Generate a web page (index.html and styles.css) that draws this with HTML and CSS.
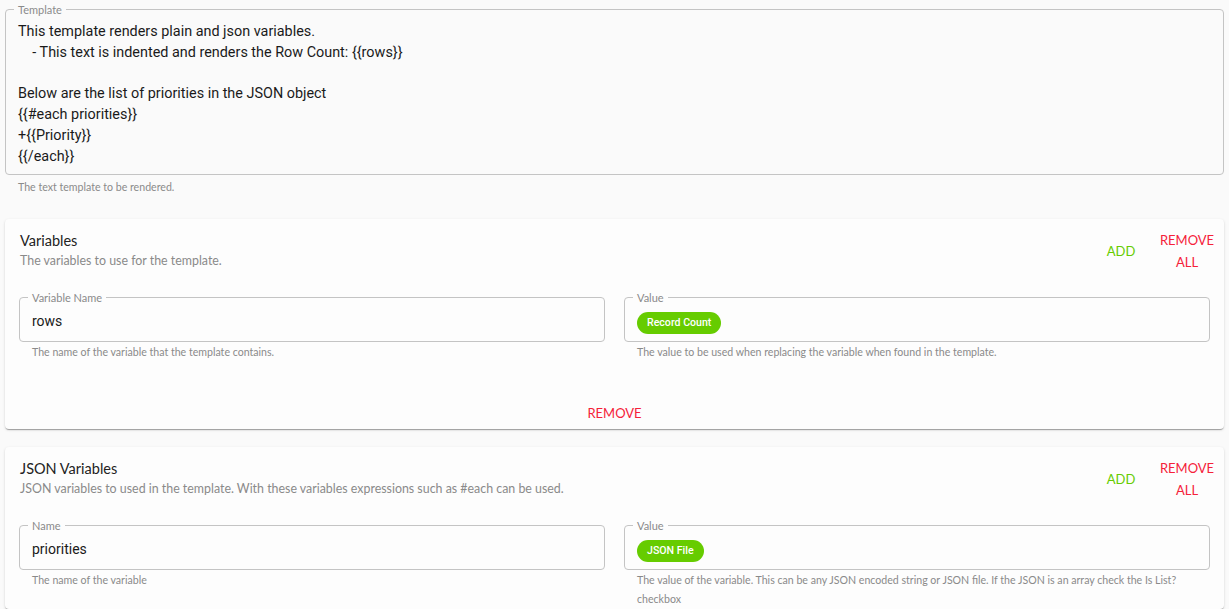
FILE: index.html
```html
<!DOCTYPE html>
<html lang="en">
<head>
<meta charset="utf-8">
<title>Template</title>
<link rel="stylesheet" href="styles.css">
</head>
<body>
<div class="page">
  <div class="field-group">
    <fieldset class="outlined template">
      <legend>Template</legend>
      <div class="template-text">This template renders plain and json variables.
    - This text is indented and renders the Row Count: {{rows}}

Below are the list of priorities in the JSON object
{{#each priorities}}
+{{Priority}}
{{/each}}</div>
    </fieldset>
    <div class="helper template-helper">The text template to be rendered.</div>
  </div>

  <section class="card">
    <div class="card-head">
      <div class="titles">
        <div class="card-title">Variables</div>
        <div class="card-sub">The variables to use for the template.</div>
      </div>
      <div class="actions">
        <button class="btn add">ADD</button>
        <button class="btn remove-all">REMOVE ALL</button>
      </div>
    </div>
    <div class="row">
      <div class="col">
        <fieldset class="outlined input">
          <legend>Variable Name</legend>
          <div class="value-text">rows</div>
        </fieldset>
        <div class="helper">The name of the variable that the template contains.</div>
      </div>
      <div class="col">
        <fieldset class="outlined input">
          <legend>Value</legend>
          <span class="chip">Record Count</span>
        </fieldset>
        <div class="helper">The value to be used when replacing the variable when found in the template.</div>
      </div>
    </div>
    <div class="card-foot">
      <button class="btn remove">REMOVE</button>
    </div>
  </section>

  <section class="card">
    <div class="card-head">
      <div class="titles">
        <div class="card-title">JSON Variables</div>
        <div class="card-sub">JSON variables to used in the template. With these variables expressions such as #each can be used.</div>
      </div>
      <div class="actions">
        <button class="btn add">ADD</button>
        <button class="btn remove-all">REMOVE ALL</button>
      </div>
    </div>
    <div class="row">
      <div class="col">
        <fieldset class="outlined input">
          <legend>Name</legend>
          <div class="value-text">priorities</div>
        </fieldset>
        <div class="helper">The name of the variable</div>
      </div>
      <div class="col">
        <fieldset class="outlined input">
          <legend>Value</legend>
          <span class="chip">JSON File</span>
        </fieldset>
        <div class="helper">The value of the variable. This can be any JSON encoded string or JSON file. If the JSON is an array check the Is List? checkbox</div>
      </div>
    </div>
  </section>
</div>
</body>
</html>
```

FILE: styles.css
```css
* { box-sizing: border-box; }

html, body {
  margin: 0;
  padding: 0;
  background: #fafafa;
  height: 609px;
  overflow: hidden;
}

body {
  font-family: "Lato", "Noto Sans", sans-serif;
  color: #333;
}

.page {
  padding: 3px 5px 0 5px;
}

.outlined {
  margin: 0;
  border: 1px solid #c4c4c4;
  border-radius: 4px;
  padding: 0 12px 6px 12px;
  min-width: 0;
}

.outlined legend {
  font-family: "Lato", sans-serif;
  font-size: 11px;
  line-height: 13px;
  color: #8a8a8a;
  padding: 0 4px;
  margin-left: -4px;
}

.template-text {
  font-family: "Roboto", sans-serif;
  font-size: 14.4px;
  line-height: 20.8px;
  color: #1a1a1a;
  white-space: pre-wrap;
  padding-top: 6px;
}

.helper {
  font-family: "Lato", sans-serif;
  font-size: 10.6px;
  line-height: 19px;
  color: #8a8a8a;
  padding: 0 14px 0 13px;
  margin-top: 1px;
}

.template-helper {
  padding-left: 13px;
  margin-top: 3px;
}

.card {
  background: #fdfdfd;
  border-radius: 4px;
  box-shadow: 0 2px 1px -1px rgba(0,0,0,0.2), 0 1px 1px 0 rgba(0,0,0,0.14), 0 1px 3px 0 rgba(0,0,0,0.12);
  padding: 10px 14px 0 14px;
  margin-top: 22px;
}

.card + .card {
  margin-top: 18px;
}

.card-head {
  display: flex;
  justify-content: space-between;
  align-items: center;
}

.titles {
  padding-left: 1px;
}

.card-title {
  font-size: 14.5px;
  line-height: 20px;
  color: #222;
}

.card-sub {
  font-size: 12.4px;
  line-height: 20px;
  color: #8a8a8a;
}

.actions {
  display: flex;
  align-items: center;
  margin-right: -11px;
}

.btn {
  font-family: "Lato", sans-serif;
  font-size: 13px;
  line-height: 22px;
  background: none;
  border: 0;
  padding: 0 8px;
  min-width: 64px;
  text-align: center;
  cursor: pointer;
}

.add {
  color: #66cc00;
}

.remove-all {
  color: #f5213a;
  width: 68px;
  padding: 0 6px;
}

.remove {
  color: #f5213a;
  padding: 7px 8px 5px;
}

.row {
  display: grid;
  grid-template-columns: 1fr 1fr;
  column-gap: 19px;
  margin-top: 18px;
}

.col {
  min-width: 0;
}

.input {
  height: 51px;
  padding: 0 12px;
  display: flex;
  align-items: center;
}

.input legend {
  margin-left: -4px;
}

.value-text {
  font-family: "Roboto", sans-serif;
  font-size: 14px;
  color: #1a1a1a;
  margin-top: -2px;
}

.chip {
  display: inline-block;
  background: #66cc00;
  color: #fff;
  font-family: "Roboto", sans-serif;
  font-weight: 500;
  font-size: 10.6px;
  line-height: 22px;
  height: 22px;
  padding: 0 10px;
  border-radius: 11px;
  margin-top: 1px;
}

.card-foot {
  display: flex;
  justify-content: center;
  margin-top: 33px;
}
```
